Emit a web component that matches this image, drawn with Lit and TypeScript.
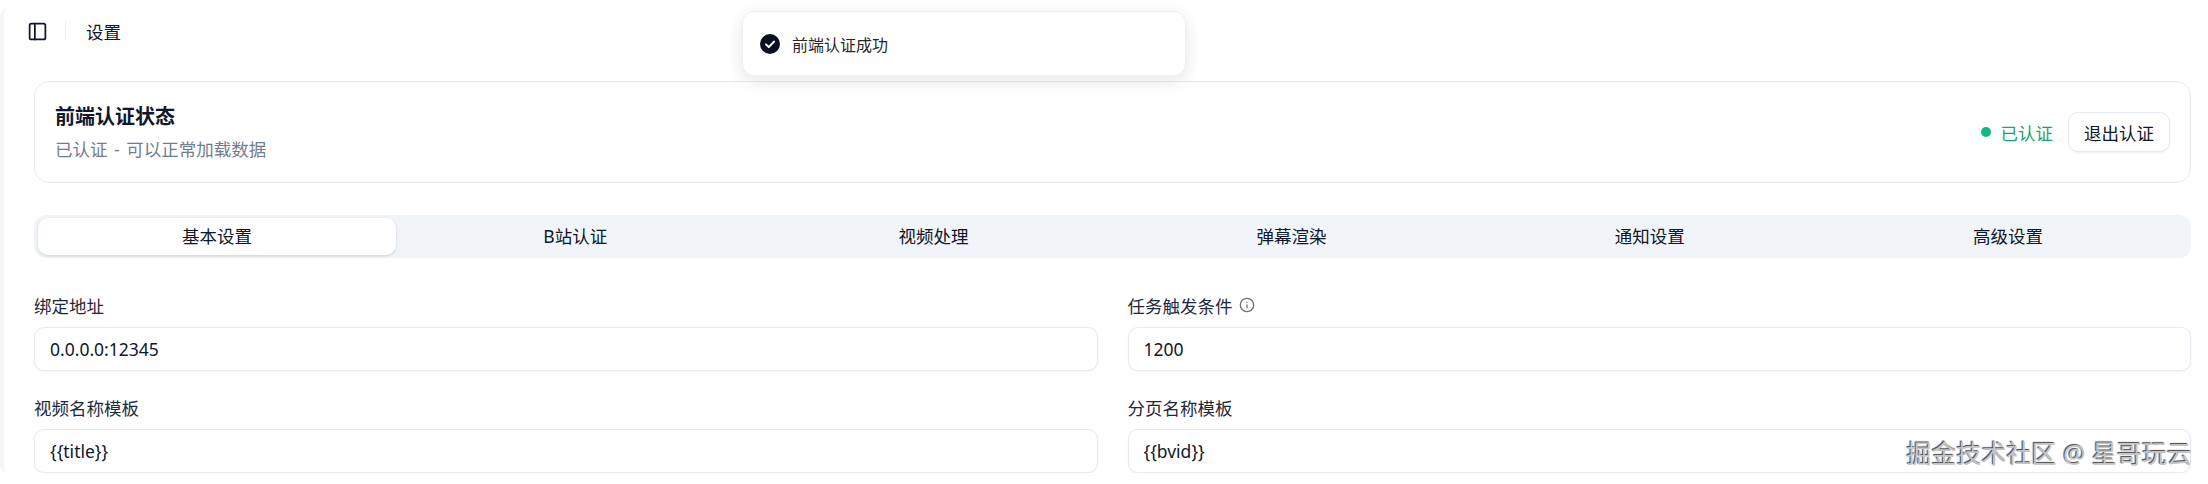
import { LitElement, html, css } from 'lit';
import { customElement } from 'lit/decorators.js';

const TABS = ['基本设置', 'B站认证', '视频处理', '弹幕渲染', '通知设置', '高级设置'];

@customElement('app-root')
export class AppRoot extends LitElement {
  static styles = css`
    :host {
      display: block;
      position: relative;
      width: 2208px;
      height: 484px;
      overflow: hidden;
      background: #fff;
      color: #0f172a;
      font-family: 'Noto Sans', 'Noto Sans CJK SC', sans-serif;
      font-size: 17.5px;
    }

    .panel {
      height: 465px;
      margin-top: 8px;
      padding: 0 17px 0 30px;
      box-sizing: border-box;
      background: #fff;
      border-left: 4px solid #f6f6f7;
      border-radius: 8px 0 0 8px;
      overflow: hidden;
    }

    .header {
      display: flex;
      align-items: center;
      height: 46px;
    }

    .sidebar-icon {
      width: 21px;
      height: 21px;
      margin-left: -7px;
      color: #0f172a;
    }

    .sep {
      width: 1px;
      height: 20px;
      background: #e9edf2;
      margin: 0 20px 0 17px;
    }

    .crumb {
      font-size: 17.5px;
    }

    .auth-card {
      display: flex;
      align-items: center;
      justify-content: space-between;
      height: 102px;
      margin-top: 27px;
      padding: 0 20px;
      box-sizing: border-box;
      border: 1px solid #e6eaf0;
      border-radius: 15px;
    }

    .auth-title {
      font-size: 20px;
      font-weight: 700;
      line-height: 28px;
    }

    .auth-sub {
      margin-top: 5px;
      color: #717e91;
      line-height: 26px;
      word-spacing: 2px;
    }

    .auth-side {
      display: flex;
      align-items: center;
    }

    .dot {
      width: 10px;
      height: 10px;
      border-radius: 50%;
      background: #10b981;
      margin-right: 10px;
    }

    .auth-ok {
      color: #1ba377;
      margin-right: 15px;
    }

    .logout {
      width: 102px;
      height: 40px;
      border: 1px solid #e6eaf0;
      border-radius: 10px;
      background: #fff;
      color: inherit;
      font: inherit;
      box-shadow: 0 1px 2px rgba(15, 23, 42, 0.06);
    }

    .tabs {
      display: grid;
      grid-template-columns: repeat(6, 1fr);
      height: 43px;
      margin-top: 32px;
      padding: 3px 4px;
      box-sizing: border-box;
      background: #f1f5f9;
      border-radius: 12px;
    }

    .tab {
      display: flex;
      align-items: center;
      justify-content: center;
      padding-bottom: 2px;
      box-sizing: border-box;
      border-radius: 10px;
    }

    .tab.active {
      background: #fff;
      box-shadow: 0 1px 3px rgba(15, 23, 42, 0.16);
    }

    .form {
      display: grid;
      grid-template-columns: 1fr 1fr;
      column-gap: 30px;
      row-gap: 22px;
      margin-top: 33px;
    }

    label {
      display: flex;
      align-items: center;
      gap: 6px;
      height: 28px;
      margin-bottom: 8px;
      color: #1e293b;
    }

    .info {
      width: 16px;
      height: 16px;
      color: #6b7280;
    }

    input {
      display: block;
      width: 100%;
      height: 44px;
      padding: 0 15px;
      box-sizing: border-box;
      border: 1px solid #e6eaf0;
      border-radius: 10px;
      background: #fff;
      color: inherit;
      font: inherit;
      outline: none;
      box-shadow: 0 1px 2px rgba(15, 23, 42, 0.05);
    }

    .toast {
      position: absolute;
      left: 742px;
      top: 11px;
      display: flex;
      align-items: center;
      gap: 12px;
      width: 444px;
      height: 65px;
      padding: 0 17px;
      box-sizing: border-box;
      background: #fff;
      border: 1px solid #eceff3;
      border-radius: 12px;
      box-shadow: 0 5px 18px rgba(15, 23, 42, 0.1);
      font-size: 16px;
      color: #27272a;
    }

    .toast svg {
      width: 20px;
      height: 20px;
    }

    .watermark {
      position: absolute;
      right: 16px;
      top: 438px;
      font-size: 25px;
      line-height: 30px;
      color: #c4c4c4;
      text-shadow: -1px -1px 1px #444;
      white-space: nowrap;
    }
  `;

  render() {
    return html`
      <div class="panel">
        <header class="header">
          <svg class="sidebar-icon" viewBox="0 0 24 24" fill="none" stroke="currentColor" stroke-width="2" stroke-linecap="round" stroke-linejoin="round">
            <rect x="3" y="3" width="18" height="18" rx="2"></rect>
            <path d="M9 3v18"></path>
          </svg>
          <div class="sep"></div>
          <div class="crumb">设置</div>
        </header>

        <section class="auth-card">
          <div>
            <div class="auth-title">前端认证状态</div>
            <div class="auth-sub">已认证 - 可以正常加载数据</div>
          </div>
          <div class="auth-side">
            <span class="dot"></span>
            <span class="auth-ok">已认证</span>
            <button class="logout">退出认证</button>
          </div>
        </section>

        <nav class="tabs">
          ${TABS.map((t, i) => html`<div class="tab ${i === 0 ? 'active' : ''}">${t}</div>`)}
        </nav>

        <div class="form">
          <div>
            <label>绑定地址</label>
            <input value="0.0.0.0:12345" />
          </div>
          <div>
            <label>
              任务触发条件
              <svg class="info" viewBox="0 0 24 24" fill="none" stroke="currentColor" stroke-width="2" stroke-linecap="round" stroke-linejoin="round">
                <circle cx="12" cy="12" r="10"></circle>
                <path d="M12 16v-4"></path>
                <path d="M12 8h.01"></path>
              </svg>
            </label>
            <input value="1200" />
          </div>
          <div>
            <label>视频名称模板</label>
            <input value="{{title}}" />
          </div>
          <div>
            <label>分页名称模板</label>
            <input value="{{bvid}}" />
          </div>
        </div>
      </div>

      <div class="toast">
        <svg viewBox="0 0 20 20">
          <circle cx="10" cy="10" r="10" fill="#0b1020"></circle>
          <path d="M6 10.4l2.8 2.7L14 7.6" fill="none" stroke="#fff" stroke-width="2" stroke-linecap="round" stroke-linejoin="round"></path>
        </svg>
        <span>前端认证成功</span>
      </div>

      <div class="watermark">掘金技术社区 @ 星哥玩云</div>
    `;
  }
}
